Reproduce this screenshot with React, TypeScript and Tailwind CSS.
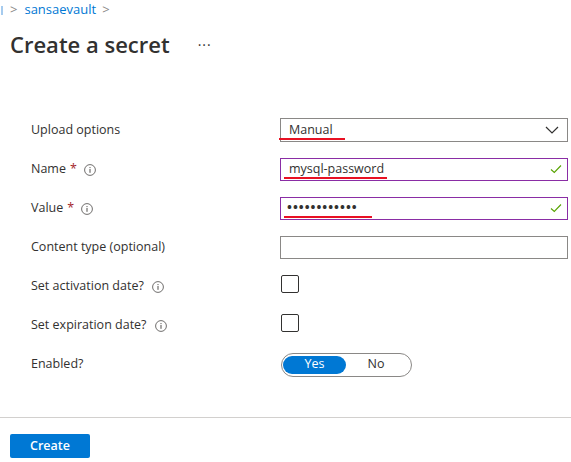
import React from 'react';

const font = { fontFamily: '"Segoe UI", "Open Sans", "Noto Sans", sans-serif' };

function InfoIcon() {
  return (
    <svg width="12" height="12" viewBox="0 0 12 12" className="shrink-0">
      <circle cx="6" cy="6" r="5.4" fill="none" stroke="#605e5c" strokeWidth="0.9" />
      <circle cx="6" cy="3.6" r="0.7" fill="#605e5c" />
      <rect x="5.45" y="5" width="1.1" height="3.8" fill="#605e5c" />
    </svg>
  );
}

function Check() {
  return (
    <svg width="12" height="10" viewBox="0 0 12 10" className="absolute right-[5px] top-1/2 -translate-y-1/2">
      <path d="M1 5.5 L4.3 8.5 L11 1.5" fill="none" stroke="#57a300" strokeWidth="1.1" />
    </svg>
  );
}

function Row({ label, children }: { label: React.ReactNode; children?: React.ReactNode }) {
  return (
    <div className="flex h-[39px] items-center">
      <div className="flex w-[280px] items-center pl-[31px] text-[12.5px] text-[#323130]">{label}</div>
      <div className="flex w-[288px] items-center">{children}</div>
    </div>
  );
}

export default function App() {
  return (
    <div className="relative h-[462px] w-[571px] overflow-hidden bg-white" style={font}>
      {/* breadcrumb */}
      <div className="flex h-[20px] items-center text-[13px]">
        <span className="ml-[1px] inline-block h-[9px] w-[2px] bg-[#a6cbee]" />
        <span className="ml-[7px] text-[#8a8886]">&gt;</span>
        <span className="ml-[7px] text-[#0078d4]">sansaevault</span>
        <span className="ml-[6px] text-[#8a8886]">&gt;</span>
      </div>

      {/* title */}
      <div className="mt-[4px] flex h-[40px] items-center pl-[10px]">
        <h1 className="text-[22px] font-semibold text-[#323130]">Create a secret</h1>
        <span className="ml-[28px] text-[14px] tracking-[1px] text-[#323130]">···</span>
      </div>

      <div className="mt-[47px]">
        <Row label="Upload options">
          <div className="relative -mt-[1px] flex h-[24px] w-[288px] items-center border border-[#8a8886] pl-[8px] text-[12.5px] text-[#323130]">
            Manual
            <div className="absolute -left-[2px] bottom-[1px] h-[2px] w-[66px] bg-[#e81123]" />
            <svg width="14" height="8" viewBox="0 0 14 8" className="absolute right-[8px] top-1/2 -translate-y-1/2">
              <path d="M1 1 L7 7 L13 1" fill="none" stroke="#323130" strokeWidth="1.2" />
            </svg>
          </div>
        </Row>
        <Row
          label={
            <>
              Name<span className="ml-[4px] text-[#a4262c]">*</span>
              <span className="ml-[7px]"><InfoIcon /></span>
            </>
          }
        >
          <div className="relative -mt-[1px] flex h-[23px] w-[288px] items-center border border-[#8a2da5] pl-[8px] text-[12.5px] text-[#323130]">
            mysql-password
            <div className="absolute left-[3px] bottom-[1px] h-[2px] w-[103px] bg-[#e81123]" />
            <Check />
          </div>
        </Row>
        <Row
          label={
            <>
              Value<span className="ml-[4px] text-[#a4262c]">*</span>
              <span className="ml-[7px]"><InfoIcon /></span>
            </>
          }
        >
          <div className="relative -mt-[1px] flex h-[23px] w-[288px] items-center border border-[#8a2da5] pl-[6px] text-[13px] font-bold tracking-[1px] text-[#323130]">
            ••••••••••••
            <div className="absolute left-[3px] bottom-[1px] h-[2px] w-[88px] bg-[#e81123]" />
            <Check />
          </div>
        </Row>
        <Row label="Content type (optional)">
          <div className="-mt-[1px] h-[23px] w-[288px] border border-[#8a8886]" />
        </Row>
        <Row
          label={
            <>
              Set activation date?<span className="ml-[8px]"><InfoIcon /></span>
            </>
          }
        >
          <div className="mb-[6px] ml-[1px] h-[18px] w-[18px] rounded-[2px] border border-[#323130]" />
        </Row>
        <Row
          label={
            <>
              Set expiration date?<span className="ml-[8px]"><InfoIcon /></span>
            </>
          }
        >
          <div className="mb-[6px] ml-[1px] h-[18px] w-[18px] rounded-[2px] border border-[#323130]" />
        </Row>
        <Row label="Enabled?">
          <div className="ml-[1px] flex h-[24px] w-[131px] items-center rounded-full border border-[#8a8886] px-[1px] text-[12.5px]">
            <div className="flex h-[18px] w-[63px] items-center justify-center rounded-full bg-[#0078d4] text-white">Yes</div>
            <div className="flex flex-1 items-center justify-center pr-[4px] text-[#323130]">No</div>
          </div>
        </Row>
      </div>

      <div className="mt-[33px] h-px w-full bg-[#d2d0ce]" />

      <div className="mt-[16px] pl-[10px]">
        <button className="flex h-[24px] w-[80px] items-center justify-center rounded-[2px] bg-[#0078d4] text-[12.5px] font-semibold text-white">
          Create
        </button>
      </div>
    </div>
  );
}
